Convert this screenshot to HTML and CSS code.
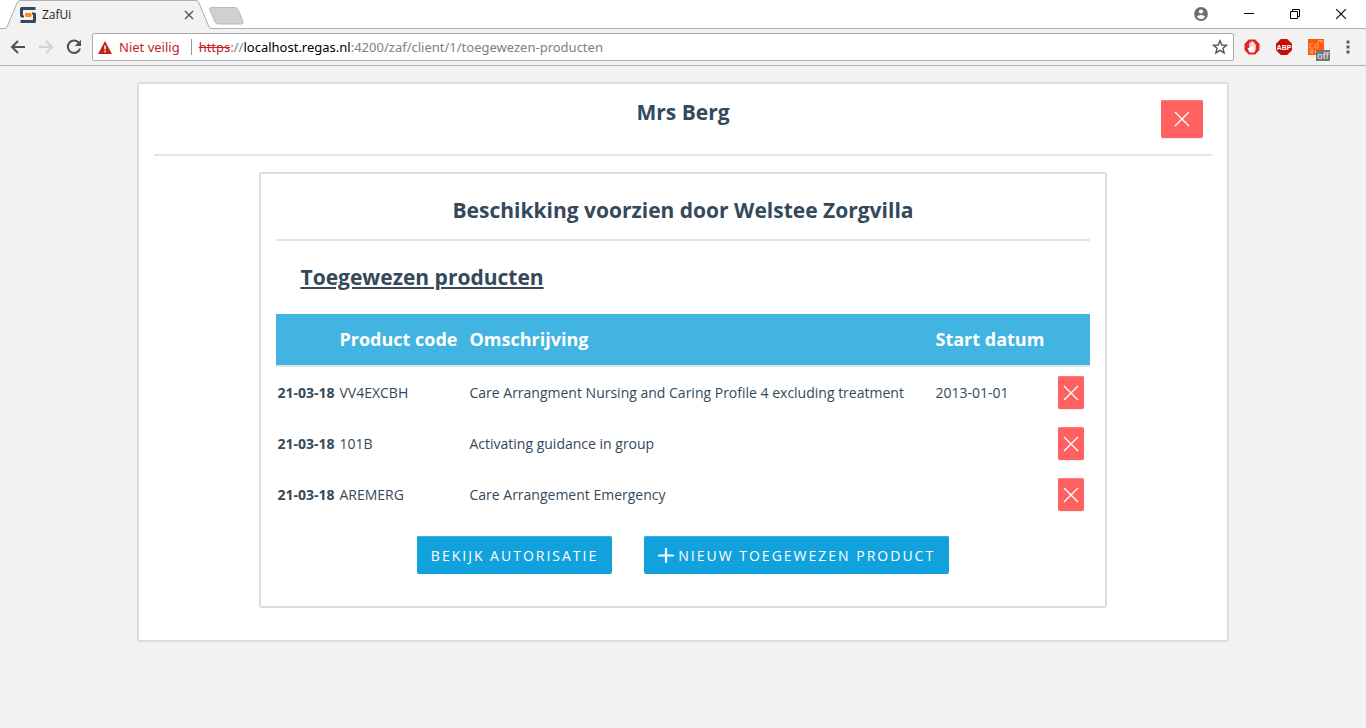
FILE: index.html
```html
<!DOCTYPE html>
<html lang="nl">
<head>
<meta charset="utf-8">
<title>ZafUi</title>
<link rel="stylesheet" href="styles.css">
</head>
<body>
<svg class="symbols" aria-hidden="true">
  <symbol id="cross" viewBox="0 0 16 16"><path d="M1 1 15 15M15 1 1 15" fill="none" stroke="#fff" stroke-width="1.400"/></symbol>
</svg>
<header class="browser">
  <div class="tab-strip">
    <div class="tab">
      <svg class="tab-shape" width="206" height="29" viewBox="0 0 206 29" aria-hidden="true"><path d="M0 28.500Q1.500 28.500 2.500 26L12 3Q13 .5 15 .5H191Q193 .5 194 3L203.500 26Q204.500 28.500 206 28.500V29H0Z" fill="#f2f2f2"/><path d="M0 28.500Q1.500 28.500 2.500 26L12 3Q13 .5 15 .5H191Q193 .5 194 3L203.500 26Q204.500 28.500 206 28.500" fill="none" stroke="#aeaeae"/></svg>
      <svg class="favicon" width="16" height="16" viewBox="0 0 16 16" aria-hidden="true"><path d="M1.500 0H15.500V3H3V8.500H4V10.500H2Q0 10.500 0 8.500V1.500Q0 0 1.500 0Z" fill="#34495a"/><path d="M14.500 16H.5V13H13V7.500H12V5.500H14Q16 5.500 16 7.500V14.500Q16 16 14.500 16Z" fill="#34495a"/><rect x="5" y="6" width="6.500" height="4" rx="1" fill="#ff8c14"/></svg>
      <span class="tab-title">ZafUi</span>
      <button class="tab-close" aria-label="Tabblad sluiten"><svg width="10" height="10" viewBox="0 0 10 10"><path d="M1 1 9 9M9 1 1 9" stroke="#5a5a5a" stroke-width="1.500"/></svg></button>
    </div>
    <button class="new-tab" aria-label="Nieuw tabblad"><svg width="35" height="18" viewBox="0 0 35 18"><path d="M2.500.5H26Q28 .5 29 2.500L34 14.500Q34.500 17 32.500 17H9Q7 17 6 15L.7 2.500Q.3.500 2.500.5Z" fill="#d0d0d0" stroke="#b9b9b9"/></svg></button>
    <div class="window-controls">
      <button class="profile" aria-label="Profiel"><svg width="14" height="14" viewBox="0 0 14 14"><circle cx="7" cy="7" r="6.900" fill="#6e6e6e"/><circle cx="7" cy="4.500" r="2.100" fill="#fff"/><path d="M2.800 9.800Q4 7.900 7 7.900T11.200 9.800Q9.600 12 7 12T2.800 9.800Z" fill="#fff"/></svg></button>
      <button class="window-button" aria-label="Minimaliseren"><svg width="10" height="10" viewBox="0 0 10 10"><path d="M0 4.500H10" stroke="#000"/></svg></button>
      <button class="window-button" aria-label="Herstellen"><svg width="10" height="10" viewBox="0 0 10 10"><path d="M.5 2.500H7.500V9.500H.5ZM2.500 2.500V.5H9.500V7.500H7.500" fill="none" stroke="#000"/></svg></button>
      <button class="window-button" aria-label="Sluiten"><svg width="10" height="10" viewBox="0 0 10 10"><path d="M0 0 10 10M10 0 0 10" stroke="#000" stroke-width="1.100"/></svg></button>
    </div>
  </div>
  <div class="toolbar">
    <button class="nav-button" aria-label="Terug"><svg width="16" height="14" viewBox="0 0 16 14"><path d="M15 7H2M8 1 2 7 8 13" fill="none" stroke="#505050" stroke-width="2"/></svg></button>
    <button class="nav-button" aria-label="Vooruit" disabled><svg width="16" height="14" viewBox="0 0 16 14"><path d="M1 7H14M8 1 14 7 8 13" fill="none" stroke="#d2d2d2" stroke-width="2"/></svg></button>
    <button class="nav-button" aria-label="Vernieuwen"><svg width="16" height="16" viewBox="0 0 16 16"><path d="M13.200 4.300A6.200 6.200 0 1 0 14 9.500" fill="none" stroke="#505050" stroke-width="2"/><path d="M15 .8V7H8.800Z" fill="#505050"/></svg></button>
    <div class="address-bar">
      <svg width="14" height="13" viewBox="0 0 14 13" aria-hidden="true"><path d="M7 0 14 13H0Z" fill="#c5221f"/><path d="M7 4.500V8.500M7 9.700V11.300" stroke="#fff" stroke-width="1.500"/></svg>
      <span class="insecure">Niet veilig</span>
      <div class="url" role="textbox" aria-label="Adres" tabindex="0"><span class="scheme">https</span>://<span class="host">localhost.regas.nl</span>:4200/zaf/client/1/toegewezen-producten</div>
      <button class="star" aria-label="Bladwijzer"><svg width="16" height="16" viewBox="0 0 16 16"><path d="M8 1.700 9.800 6 14.500 6.300 10.900 9.300 12.100 13.900 8 11.400 3.900 13.900 5.100 9.300 1.500 6.300 6.200 6Z" fill="none" stroke="#555" stroke-width="1.400"/></svg></button>
    </div>
    <button class="extension" aria-label="Adblock"><svg width="16" height="16" viewBox="0 0 16 16"><path d="M4.700.5H11.300L15.500 5V11L11.300 15.500H4.700L.5 11V5Z" fill="#e02326"/><path d="M5.800 13.500Q4 11 3.500 9Q4 8.200 5.300 9.500V4.200Q5.900 3.300 6.500 4.200V2.800Q7.200 2 7.900 2.800Q8.700 2 9.300 3Q10.200 2.700 10.500 3.800V5Q11.300 4.600 11.700 5.500V9.500Q11.500 11.800 10 13.500Z" fill="#fff"/><path d="M6.500 4V8M7.900 3V8M9.300 3.300V8M10.500 4.600V8.500" stroke="#e59a9b" stroke-width=".5"/></svg></button>
    <button class="extension" aria-label="Adblock Plus"><svg width="16" height="16" viewBox="0 0 16 16"><path d="M4.800 0H11.200L16 4.800V11.200L11.200 16H4.800L0 11.200V4.800Z" fill="#c70d0c"/><text class="abp-text" x="8" y="10.500" text-anchor="middle">ABP</text></svg></button>
    <button class="extension" aria-label="CORS"><svg class="cors" width="16" height="16" viewBox="0 0 16 16"><path d="M0 0H16V16H0Z" fill="#ff5a08"/><path d="M5 5H2V9H5M7 5H10V9H7ZM2.500 15V11H5V13H2.500L5 15M7.500 15V11M10.500 4V1.500H15M12.500 1.500V4M14.500 1.500V4" fill="none" stroke="#ff9c6a"/><path d="M8 11H22V22H8Z" fill="#777"/><text class="off-text" x="15" y="19.500" text-anchor="middle">off</text></svg></button>
    <button class="extension" aria-label="Menu"><svg width="4" height="14" viewBox="0 0 4 14"><path d="M.5.5H3.500V3.500H.5ZM.5 5.500H3.500V8.500H.5ZM.5 10.500H3.500V13.500H.5Z" fill="#5a5a5a"/></svg></button>
  </div>
</header>
<main class="page">
  <section class="card client">
    <div class="client-header">
      <h1 class="title client-name">Mrs Berg</h1>
      <button class="button button-danger" aria-label="Sluiten"><svg class="cross" aria-hidden="true"><use href="#cross"/></svg></button>
    </div>
    <section class="card decision">
      <h2 class="title decision-title">Beschikking voorzien door Welstee Zorgvilla</h2>
      <h3 class="title products-title">Toegewezen producten</h3>
      <table class="products">
        <colgroup><col class="col-date"><col class="col-code"><col class="col-description"><col class="col-start"><col class="col-action"></colgroup>
        <thead>
          <tr><th></th><th>Product code</th><th>Omschrijving</th><th>Start datum</th><th></th></tr>
        </thead>
        <tbody>
          <tr><td class="date">21-03-18</td><td>VV4EXCBH</td><td>Care Arrangment Nursing and Caring Profile 4 excluding treatment</td><td>2013-01-01</td><td><button class="button button-danger button-small" aria-label="Verwijderen"><svg class="cross" aria-hidden="true"><use href="#cross"/></svg></button></td></tr>
          <tr><td class="date">21-03-18</td><td>101B</td><td>Activating guidance in group</td><td></td><td><button class="button button-danger button-small" aria-label="Verwijderen"><svg class="cross" aria-hidden="true"><use href="#cross"/></svg></button></td></tr>
          <tr><td class="date">21-03-18</td><td>AREMERG</td><td>Care Arrangement Emergency</td><td></td><td><button class="button button-danger button-small" aria-label="Verwijderen"><svg class="cross" aria-hidden="true"><use href="#cross"/></svg></button></td></tr>
        </tbody>
      </table>
      <div class="actions">
        <button class="button button-primary">BEKIJK AUTORISATIE</button>
        <button class="button button-primary"><svg width="16" height="16" viewBox="0 0 16 16" aria-hidden="true"><path d="M8 1V14M1 7.500H15" stroke="#fff" stroke-width="2.200" stroke-linecap="round"/></svg>NIEUW TOEGEWEZEN PRODUCT</button>
      </div>
    </section>
  </section>
</main>
</body>
</html>
```
FILE: styles.css
```css
* { box-sizing: border-box; }
body {
  margin: 0;
  min-height: 100vh;
  background: #f2f2f2;
  color: #34495a;
  font: 14px/20px "Open Sans", "Noto Sans", sans-serif;
}
button {
  display: flex;
  align-items: center;
  justify-content: center;
  padding: 0;
  border: 0;
  background: none;
  color: inherit;
  font: inherit;
}
svg { flex: none; }
.symbols { display: none; }

/* Browser window */
.browser { border-bottom: 1px solid #b0b0b0; }
.tab-strip {
  display: flex;
  height: 29px;
  background: #fff;
  border-bottom: 1px solid #b0b0b0;
}
.tab {
  position: relative;
  display: flex;
  align-items: center;
  gap: 6px;
  width: 206px;
  height: 29px;
  margin-left: 5px;
  padding: 0 17px 0 15px;
}
.tab-shape { position: absolute; left: 0; top: 0; }
.favicon, .tab-title, .tab-close { position: relative; }
.tab-title { flex: 1; color: #222; font-size: 12px; }
.new-tab { width: 35px; height: 31px; margin-left: -2px; }
.window-controls { display: flex; margin-left: auto; padding-right: 2px; height: 27px; }
.profile { width: 50px; }
.window-button { width: 46px; }
.toolbar { display: flex; height: 36px; padding: 4px 2px 4px 4px; }
.nav-button { width: 28px; }
.address-bar {
  flex: 1;
  display: flex;
  align-items: center;
  margin: 0 2px 0 4px;
  padding: 0 5px;
  border: 1px solid #adadad;
  border-radius: 2px;
  background: #fff;
  color: #808080;
  font: 13px/20px "Noto Sans", "Open Sans", sans-serif;
}
.insecure { margin: 0 11px 0 7px; color: #c5221f; white-space: nowrap; }
.url {
  position: relative;
  flex: 1;
  padding-left: 8px;
  white-space: nowrap;
}
.url::before {
  content: "";
  position: absolute;
  left: 0;
  top: 2px;
  height: 16px;
  border-left: 1px solid #999;
}
.scheme { color: #c5221f; text-decoration: line-through; }
.host { color: #000; }
.extension { width: 32px; }
.cors { overflow: visible; }
.abp-text { font: 700 7px "Liberation Sans", sans-serif; fill: #fff; }
.off-text { font: 9px "Open Sans", sans-serif; fill: #fff; }

/* Page */
.page { padding: 16px 0; }
.card {
  width: 80%;
  margin: 0 auto;
  padding: 15px;
  border: 2px solid #ddd;
  border-radius: 3px;
  background: #fff;
}
.client { padding-bottom: 32px; }
.title { margin: 0; font-size: 21px; line-height: 28px; font-weight: 700; }
.client-header {
  display: grid;
  grid-template-columns: 1fr auto 1fr;
  margin-bottom: 16px;
  padding: 1px 9px 16px;
  border-bottom: 2px solid #e4e4e4;
}
.client-name { grid-column: 2; line-height: 24px; }
.client-header .button { justify-self: end; }
.button {
  height: 38px;
  border-radius: 2px;
  color: #fff;
  letter-spacing: 2px;
}
.button-danger {
  width: 42px;
  background: #ff6161;
  box-shadow: inset 0 3px 0 -2px #ff7a7a, 0 1px 1px #eee;
}
.button-primary {
  gap: 4px;
  padding: 1px 14px 0;
  background: #11a2dd;
  box-shadow: inset 0 3px 0 -2px #35b0e2;
}
.cross { width: 16px; height: 16px; }
.button-small { width: 26px; height: 33px; }
.decision { padding-bottom: 32px; }
.decision-title {
  padding: 7px 0 15px;
  border-bottom: 2px solid #e4e4e4;
  text-align: center;
}
.products-title { padding: 22px 24px 23px; text-decoration: underline; }
.products { width: 100%; border-spacing: 0; table-layout: fixed; }
.col-date { width: 62px; }
.col-code { width: 130px; }
.col-start { width: 122px; }
.col-action { width: 33px; }
th {
  height: 53px;
  padding: 0 1px 2px;
  border-bottom: 2px solid #e4e4e4;
  background: #41b4e1;
  background-clip: padding-box;
  color: #fff;
  font-size: 18px;
  font-weight: 700;
  text-align: left;
  white-space: nowrap;
}
td { height: 51px; padding: 0 1px; white-space: nowrap; }
.date { font-weight: 700; }
.actions { display: flex; justify-content: center; gap: 32px; padding-top: 16px; }
```
